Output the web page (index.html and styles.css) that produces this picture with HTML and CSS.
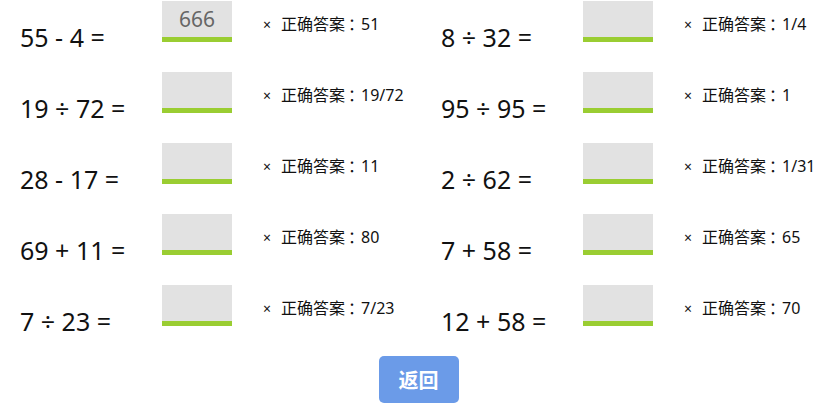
FILE: index.html
```html
<!DOCTYPE html>
<html lang="zh">
<head>
<meta charset="utf-8">
<title>练习结果</title>
<link rel="stylesheet" href="styles.css">
</head>
<body>
<div class="page">
  <div class="grid">
    <div class="item"><span class="eq">55 - 4 =</span><div class="box">666</div><span class="fb"><span class="mark">×</span>正确答案<span class="colon">：</span>51</span></div>
    <div class="item"><span class="eq">8 ÷ 32 =</span><div class="box"></div><span class="fb"><span class="mark">×</span>正确答案<span class="colon">：</span>1/4</span></div>
    <div class="item"><span class="eq">19 ÷ 72 =</span><div class="box"></div><span class="fb"><span class="mark">×</span>正确答案<span class="colon">：</span>19/72</span></div>
    <div class="item"><span class="eq">95 ÷ 95 =</span><div class="box"></div><span class="fb"><span class="mark">×</span>正确答案<span class="colon">：</span>1</span></div>
    <div class="item"><span class="eq">28 - 17 =</span><div class="box"></div><span class="fb"><span class="mark">×</span>正确答案<span class="colon">：</span>11</span></div>
    <div class="item"><span class="eq">2 ÷ 62 =</span><div class="box"></div><span class="fb"><span class="mark">×</span>正确答案<span class="colon">：</span>1/31</span></div>
    <div class="item"><span class="eq">69 + 11 =</span><div class="box"></div><span class="fb"><span class="mark">×</span>正确答案<span class="colon">：</span>80</span></div>
    <div class="item"><span class="eq">7 + 58 =</span><div class="box"></div><span class="fb"><span class="mark">×</span>正确答案<span class="colon">：</span>65</span></div>
    <div class="item"><span class="eq">7 ÷ 23 =</span><div class="box"></div><span class="fb"><span class="mark">×</span>正确答案<span class="colon">：</span>7/23</span></div>
    <div class="item"><span class="eq">12 + 58 =</span><div class="box"></div><span class="fb"><span class="mark">×</span>正确答案<span class="colon">：</span>70</span></div>
  </div>
  <div class="actions"><button class="back">返回</button></div>
</div>
</body>
</html>
```

FILE: styles.css
```css
html, body {
  margin: 0;
  padding: 0;
  background: #ffffff;
}
body {
  font-family: "Noto Sans", "Noto Sans CJK SC", sans-serif;
  color: #111;
}
.page {
  padding: 1px 0 0 20px;
}
.grid {
  display: grid;
  grid-template-columns: 421px 1fr;
}
.item {
  display: flex;
  align-items: flex-start;
  height: 41px;
  margin-bottom: 30px;
}
.eq {
  width: 142px;
  flex: none;
  font-size: 25px;
  line-height: 32px;
  margin-top: 20px;
  white-space: nowrap;
}
.box {
  width: 70px;
  height: 36px;
  flex: none;
  background: #e2e2e2;
  border-bottom: 5px solid #9acd32;
  color: #666;
  font-size: 21px;
  line-height: 36px;
  text-align: center;
}
.fb {
  margin-left: 31px;
  margin-top: 12px;
  font-size: 16px;
  line-height: 22px;
  white-space: nowrap;
}
.mark {
  font-size: 14px;
  margin-right: 10px;
}
.colon {
  margin-left: 3px;
  letter-spacing: -3px;
}
.actions {
  display: flex;
  justify-content: center;
  margin-left: -20px;
}
.back {
  width: 80px;
  height: 47px;
  border: none;
  border-radius: 5px;
  background: #6b9be8;
  color: #fff;
  font-family: "Noto Sans CJK SC", sans-serif;
  font-weight: bold;
  font-size: 20px;
  padding: 0;
}
```
